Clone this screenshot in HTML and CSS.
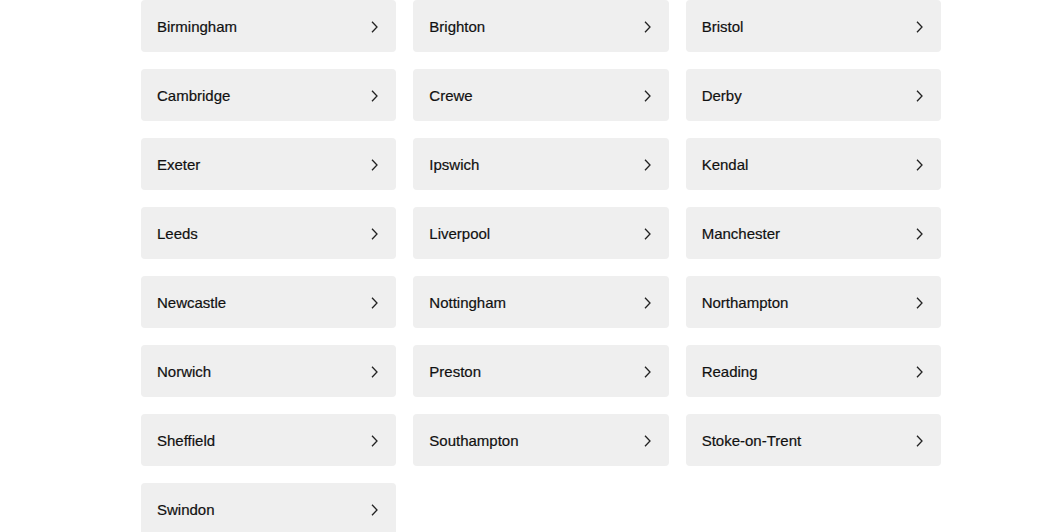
FILE: index.html
```html
<!DOCTYPE html>
<html lang="en">
<head>
<meta charset="utf-8">
<title>Locations</title>
<link rel="stylesheet" href="styles.css">
</head>
<body>
<main class="wrap">
  <ul class="grid">
    <li><a class="card" href="#"><span>Birmingham</span><svg class="chev" viewBox="0 0 7 12"><path d="M1 0.8 L6 6 L1 11.2"/></svg></a></li>
    <li><a class="card" href="#"><span>Brighton</span><svg class="chev" viewBox="0 0 7 12"><path d="M1 0.8 L6 6 L1 11.2"/></svg></a></li>
    <li><a class="card" href="#"><span>Bristol</span><svg class="chev" viewBox="0 0 7 12"><path d="M1 0.8 L6 6 L1 11.2"/></svg></a></li>
    <li><a class="card" href="#"><span>Cambridge</span><svg class="chev" viewBox="0 0 7 12"><path d="M1 0.8 L6 6 L1 11.2"/></svg></a></li>
    <li><a class="card" href="#"><span>Crewe</span><svg class="chev" viewBox="0 0 7 12"><path d="M1 0.8 L6 6 L1 11.2"/></svg></a></li>
    <li><a class="card" href="#"><span>Derby</span><svg class="chev" viewBox="0 0 7 12"><path d="M1 0.8 L6 6 L1 11.2"/></svg></a></li>
    <li><a class="card" href="#"><span>Exeter</span><svg class="chev" viewBox="0 0 7 12"><path d="M1 0.8 L6 6 L1 11.2"/></svg></a></li>
    <li><a class="card" href="#"><span>Ipswich</span><svg class="chev" viewBox="0 0 7 12"><path d="M1 0.8 L6 6 L1 11.2"/></svg></a></li>
    <li><a class="card" href="#"><span>Kendal</span><svg class="chev" viewBox="0 0 7 12"><path d="M1 0.8 L6 6 L1 11.2"/></svg></a></li>
    <li><a class="card" href="#"><span>Leeds</span><svg class="chev" viewBox="0 0 7 12"><path d="M1 0.8 L6 6 L1 11.2"/></svg></a></li>
    <li><a class="card" href="#"><span>Liverpool</span><svg class="chev" viewBox="0 0 7 12"><path d="M1 0.8 L6 6 L1 11.2"/></svg></a></li>
    <li><a class="card" href="#"><span>Manchester</span><svg class="chev" viewBox="0 0 7 12"><path d="M1 0.8 L6 6 L1 11.2"/></svg></a></li>
    <li><a class="card" href="#"><span>Newcastle</span><svg class="chev" viewBox="0 0 7 12"><path d="M1 0.8 L6 6 L1 11.2"/></svg></a></li>
    <li><a class="card" href="#"><span>Nottingham</span><svg class="chev" viewBox="0 0 7 12"><path d="M1 0.8 L6 6 L1 11.2"/></svg></a></li>
    <li><a class="card" href="#"><span>Northampton</span><svg class="chev" viewBox="0 0 7 12"><path d="M1 0.8 L6 6 L1 11.2"/></svg></a></li>
    <li><a class="card" href="#"><span>Norwich</span><svg class="chev" viewBox="0 0 7 12"><path d="M1 0.8 L6 6 L1 11.2"/></svg></a></li>
    <li><a class="card" href="#"><span>Preston</span><svg class="chev" viewBox="0 0 7 12"><path d="M1 0.8 L6 6 L1 11.2"/></svg></a></li>
    <li><a class="card" href="#"><span>Reading</span><svg class="chev" viewBox="0 0 7 12"><path d="M1 0.8 L6 6 L1 11.2"/></svg></a></li>
    <li><a class="card" href="#"><span>Sheffield</span><svg class="chev" viewBox="0 0 7 12"><path d="M1 0.8 L6 6 L1 11.2"/></svg></a></li>
    <li><a class="card" href="#"><span>Southampton</span><svg class="chev" viewBox="0 0 7 12"><path d="M1 0.8 L6 6 L1 11.2"/></svg></a></li>
    <li><a class="card" href="#"><span>Stoke-on-Trent</span><svg class="chev" viewBox="0 0 7 12"><path d="M1 0.8 L6 6 L1 11.2"/></svg></a></li>
    <li><a class="card" href="#"><span>Swindon</span><svg class="chev" viewBox="0 0 7 12"><path d="M1 0.8 L6 6 L1 11.2"/></svg></a></li>
  </ul>
</main>
</body>
</html>
```

FILE: styles.css
```css
html, body {
  margin: 0;
  padding: 0;
  background: #ffffff;
}
body {
  font-family: "Liberation Sans", Arial, sans-serif;
  color: #111111;
}
.wrap {
  padding-left: 141px;
}
.grid {
  list-style: none;
  margin: 0;
  padding: 0;
  width: 800px;
  display: grid;
  grid-template-columns: repeat(3, 1fr);
  column-gap: 17px;
  row-gap: 17px;
}
.card {
  display: flex;
  align-items: center;
  justify-content: space-between;
  height: 52px;
  box-sizing: border-box;
  padding: 0 18px 0 16px;
  background: #efefef;
  border-radius: 4px;
  text-decoration: none;
  color: #111111;
  font-size: 15px;
  -webkit-text-stroke: 0.2px #111111;
}
.chev {
  width: 7px;
  height: 12px;
  margin-top: 2px;
  fill: none;
  stroke: #222222;
  stroke-width: 1.3;
}
```
